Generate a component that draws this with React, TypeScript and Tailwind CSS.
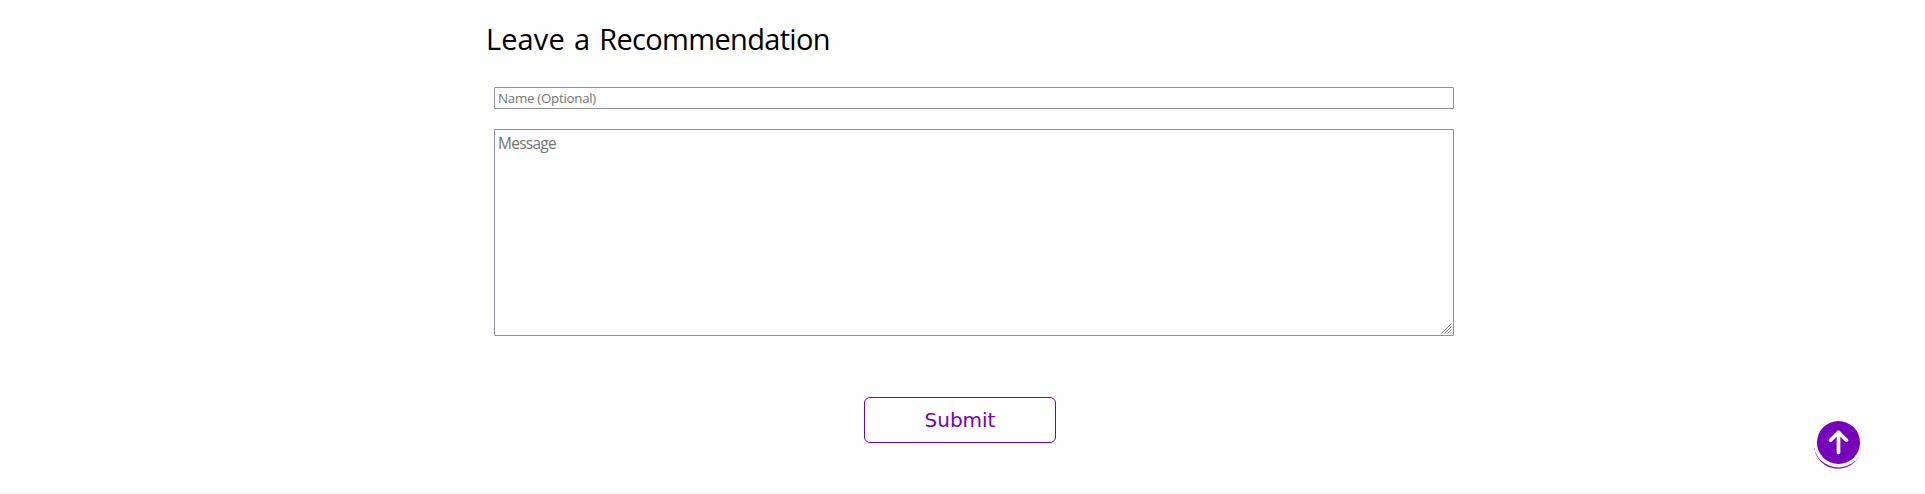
export default function App() {
  return (
    <div className="flex h-[494px] w-full flex-col border-b-2 border-[#fafafa] bg-[#fefefe] font-['Open_Sans',sans-serif]">
      <form className="flex flex-col">
        <h2 className="mt-[19px] ml-[486px] h-10 text-[29px] leading-10 font-[450] whitespace-nowrap text-black">
          <span className="tracking-[0.1px] [word-spacing:1.5px]">Leave a </span>
          <span className="tracking-[-0.68px]">Recommendation</span>
        </h2>
        <input
          type="text"
          placeholder="Name (Optional)"
          className="mt-[28px] ml-[494px] h-[22px] w-[960px] rounded-[1px] border border-[#8f8f9d] bg-[#fefefe] px-[3px] text-[13.33px] leading-5 tracking-[-0.28px] placeholder:text-[#757575]"
        />
        <div className="relative mt-5 ml-[494px] h-[207px] w-[960px]">
          <textarea
            placeholder="Message"
            className="block h-full w-full resize-none rounded-[1px] border border-[#8f8f9d] bg-[#fefefe] px-[3px] pt-[2px] text-[15.5px] leading-[22px] tracking-[-0.75px] placeholder:text-[#757575]"
          />
          <svg viewBox="0 0 11 11" className="pointer-events-none absolute right-[2px] bottom-[2px] h-[11px] w-[11px]">
            <path d="M.5 10.5l10-10M3.5 10.5l7-7M6.5 10.5l4-4M9.5 10.5l1-1" fill="none" stroke="#777777" strokeWidth="1" />
          </svg>
        </div>
        <button
          type="button"
          className="mt-[61px] ml-[864px] h-[46px] w-[192px] rounded-md border border-[#7700bb] bg-white font-['DejaVu_Sans',sans-serif] text-[20px] text-[#7700bb]"
        >
          Submit
        </button>
      </form>
      <a href="#" aria-label="Back to top" className="fixed top-[415px] left-[1810px] h-[58px] w-[56px]">
        <svg viewBox="0 0 56 58" className="h-full w-full">
          <circle cx="28" cy="29.7" r="24.1" fill="#7700bb" />
          <circle cx="28.4" cy="27.6" r="24.9" fill="#fefefe" />
          <circle cx="28.5" cy="27.5" r="21.5" fill="#7700bb" />
          <path d="M28.5 37.5V17.5M20.5 25.3l8-8 8 8" fill="none" stroke="white" strokeWidth="3.7" strokeLinecap="round" strokeLinejoin="round" />
        </svg>
      </a>
    </div>
  );
}
